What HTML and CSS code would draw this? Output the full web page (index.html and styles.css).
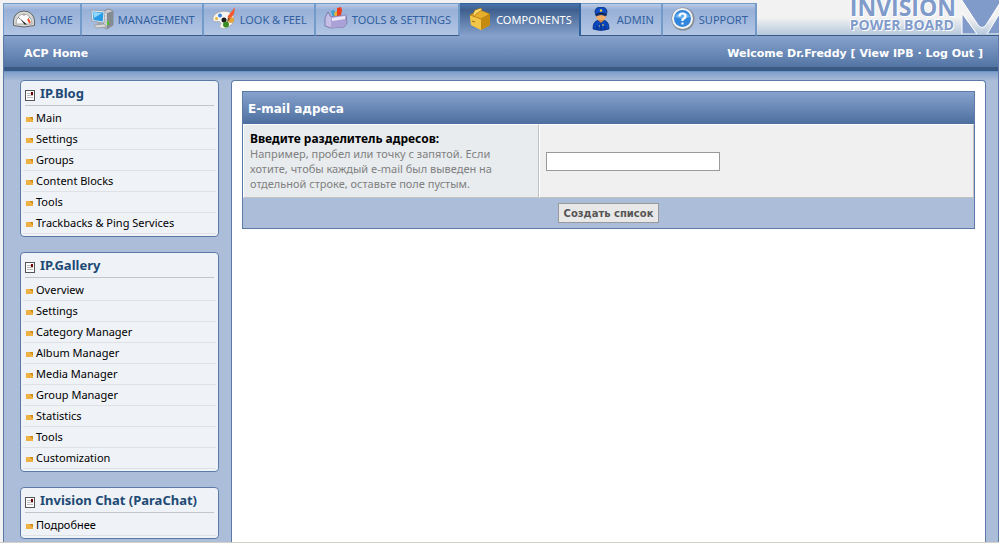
FILE: index.html
```html
<!DOCTYPE html>
<html lang="ru">
<head>
  <meta charset="UTF-8"/>
  <meta name="viewport" content="width=device-width, initial-scale=1.0"/>
  <title>ACP Home</title>
  <link rel="stylesheet" href="styles.css">
</head>
<body>
  <header class="topbar">
    <nav class="tabs">
      <a href="#" class="tab">
        <svg class="icon" viewBox="0 0 24 24">
          <path d="M1.500 18.500V14A10.500 10 0 0 1 22.500 14V18.500Q12 21.500 1.500 18.500Z" fill="#d8d8d6" stroke="#666" stroke-width="1"/>
          <path d="M4 17A8 10 0 0 1 20 17Z" fill="#fff" stroke="#aaa"/>
          <path d="M6 10l2 2M12 7v2M18 10l-2 2" stroke="#888"/>
          <path d="M7.500 11L12.500 17.500L15 17.500Z" fill="#222"/>
          <path d="M16 12l2 4" stroke="#f04a20" stroke-width="2"/>
        </svg>
        HOME
      </a>
      <a href="#" class="tab">
        <svg class="icon" viewBox="0 0 24 24">
          <path d="M13 4l6-2 4 2v14l-6 4-4-2z" fill="#c9ccd0" stroke="#777" stroke-width=".7"/>
          <path d="M17 6v16l6-4V4z" fill="#858b92"/>
          <path d="M14 7l2 1M14 10l2 1" stroke="#fff"/>
          <rect x="17" y="14" width="2" height="4" fill="#55bd32"/>
          <path d="M1 3l14 1-1 12L2 14z" fill="#e6e8ec" stroke="#8a94a5" stroke-width=".7"/>
          <path d="M2.500 4.500l11 1-.8 9L3.500 13z" fill="#279be6"/>
          <path d="M3 5l9 1-8 5z" fill="#93d6fa"/>
          <path d="M7 15h4v3H7z" fill="#a3a7b0"/>
          <path d="M4 18l10-1 3 3-11 1z" fill="#d9dadd" stroke="#888" stroke-width=".6"/>
        </svg>
        MANAGEMENT
      </a>
      <a href="#" class="tab">
        <svg class="icon" viewBox="0 0 24 24">
          <path d="M1 11C2 5 13 2 19 6C24 10 22 18 16 20C13 22 9 22 8 20C7 18 10 17 8 15C6 13 0 17 1 11Z" fill="#f5f4f0" stroke="#a5a5a5" stroke-width=".8"/>
          <circle cx="8" cy="8.500" r="2" fill="#3d85d9"/>
          <circle cx="4.500" cy="11.500" r="1.500" fill="#e7b72b"/>
          <circle cx="12" cy="13" r="2.500" fill="#1b1b1b"/>
          <circle cx="19" cy="13" r="3" fill="#e4a43a"/>
          <circle cx="14" cy="17.500" r="3" fill="#3a8c22"/>
          <path d="M15 16l1-6 2 2z" fill="#8b4a26"/>
          <path d="M15.500 9.500L20 4l3-4-1 7-4 5z" fill="#f4592c"/>
        </svg>
        LOOK &amp; FEEL
      </a>
      <a href="#" class="tab">
        <svg class="icon" viewBox="0 0 24 24">
          <path d="M7 4l3-1 3 9-3 1z" fill="#35a1d1"/>
          <path d="M10 6l3-2 1 8h-3z" fill="#e6b331"/>
          <path d="M13 1l4-1 1 3-2 11-3-1z" fill="#eb3e20"/>
          <path d="M1 11l3-6 3 5 15-2 1 8-3 4-13 1-6-2z" fill="#c5bfe6" stroke="#706aa0" stroke-width=".8"/>
          <path d="M7 10l15-2v9l-2 3-13 1z" fill="#aaa2d6"/>
          <path d="M8 11l13-2v3L8 14z" fill="#eceaf8"/>
        </svg>
        TOOLS &amp; SETTINGS
      </a>
      <a href="#" class="tab active">
        <svg class="icon" viewBox="0 0 24 24">
          <path d="M2 8l10-5 10 4v11l-9 5-10-5z" fill="#edb52e"/>
          <path d="M2 8l11 4v11L3 18z" fill="#f2c649"/>
          <path d="M13 12l9-5v11l-9 5z" fill="#c58a10"/>
          <path d="M2 8l10-5 10 4-9 5z" fill="#e7ae2c" stroke="#9c6d0c" stroke-width=".6"/>
          <path d="M5 7l2-4 6-2 1 2-6 4-2 3z" fill="#ffd86a" stroke="#9c6d0c" stroke-width=".6"/>
          <path d="M4 14l3 1" stroke="#99690a"/>
        </svg>
        COMPONENTS
      </a>
      <a href="#" class="tab">
        <svg class="icon" viewBox="0 0 24 24">
          <path d="M4 22c0-6 2-9 8-9s8 3 8 9q-8 3-16 0z" fill="#0c46bd" stroke="#072872" stroke-width=".7"/>
          <path d="M8 22v-3M16 22v-3M12 15v8" stroke="#082977"/>
          <circle cx="12" cy="9" r="5" fill="#efad69"/>
          <path d="M9 13h6l-3 3z" fill="#d48a43"/>
          <path d="M6 5q0-5 6-5t6 5l-1 4q-5-3-10 0z" fill="#104ac4" stroke="#072765" stroke-width=".7"/>
          <path d="M7 7q5-2 10 0v1q-5-2-10 0z" fill="#111"/>
          <circle cx="12" cy="3.500" r="1.200" fill="#f1d642"/>
          <path d="M10 19h1M13 18h2" stroke="#f1d642"/>
        </svg>
        ADMIN
      </a>
      <a href="#" class="tab">
        <svg class="icon" viewBox="0 0 24 24">
          <circle cx="12" cy="12" r="11.500" fill="#858b93"/>
          <circle cx="11.500" cy="11.500" r="10.500" fill="#f1f2f3"/>
          <circle cx="11.500" cy="11.500" r="8.500" fill="#3185dd"/>
          <path d="M4 10a8 7 0 0 1 15 0q-7 3-15 0z" fill="#69b2ef"/>
          <path d="M8.500 9.500q0-3 3-3t3 2.500q0 2-3 3.500v1.500M11.500 15.500v2" fill="none" stroke="#fff" stroke-width="2.200"/>
        </svg>
        SUPPORT
      </a>
    </nav>
    <div class="logo">
      <div class="logo-text">
        <span class="logo-name">INVISION</span>
        <span class="logo-sub">POWER BOARD</span>
      </div>
      <svg class="logo-mark" viewBox="0 0 38 34">
        <path d="M1 0H38V4L25 25Q21 30 17 25Z" fill="#809bca"/>
        <path d="M1 14L15 33H1ZM38 14V33H27Z" fill="#809bca"/>
        <path d="M0 -1L17 25Q21 30 25 25L39 3M1 34V13L16 34M26 34L39 13" fill="none" stroke="#fff" stroke-width="1"/>
      </svg>
    </div>
  </header>

  <div class="page">
    <div class="menubar">
      <a href="#">ACP Home</a>
      <div>Welcome Dr.Freddy [ <a href="#">View IPB</a> &middot; <a href="#">Log Out</a> ]</div>
    </div>

    <div class="layout">
      <!-- Side menu -->
      <aside class="sidebar">
        <section class="box">
          <h2 class="box-title"><span class="doc"></span>IP.Blog</h2>
          <ul class="menu">
            <li><a href="#">Main</a></li>
            <li><a href="#">Settings</a></li>
            <li><a href="#">Groups</a></li>
            <li><a href="#">Content Blocks</a></li>
            <li><a href="#">Tools</a></li>
            <li><a href="#">Trackbacks &amp; Ping Services</a></li>
          </ul>
        </section>
        <section class="box">
          <h2 class="box-title"><span class="doc"></span>IP.Gallery</h2>
          <ul class="menu">
            <li><a href="#">Overview</a></li>
            <li><a href="#">Settings</a></li>
            <li><a href="#">Category Manager</a></li>
            <li><a href="#">Album Manager</a></li>
            <li><a href="#">Media Manager</a></li>
            <li><a href="#">Group Manager</a></li>
            <li><a href="#">Statistics</a></li>
            <li><a href="#">Tools</a></li>
            <li><a href="#">Customization</a></li>
          </ul>
        </section>
        <section class="box">
          <h2 class="box-title"><span class="doc"></span>Invision Chat (ParaChat)</h2>
          <ul class="menu">
            <li><a href="#">Подробнее</a></li>
          </ul>
        </section>
      </aside>

      <!-- Content -->
      <main class="content">
        <form class="form" onsubmit="return false">
          <h1 class="form-title">E-mail адреса</h1>
          <div class="form-row">
            <label class="form-label" for="separator">
              <b>Введите разделитель адресов:</b>
              <span class="hint">Например, пробел или точку с запятой. Если хотите, чтобы каждый e-mail был выведен на отдельной строке, оставьте поле пустым.</span>
            </label>
            <div class="form-field">
              <input type="text" id="separator" name="separator">
            </div>
          </div>
          <div class="form-footer">
            <button type="submit">Создать список</button>
          </div>
        </form>
      </main>
    </div>
  </div>
</body>
</html>
```

FILE: styles.css
```css
:root {
  --line: #5c7aa8;
  --panel: #abbdd8;
  --dark: #3a5985;
  --tab-line: #739bca;
  --head: linear-gradient(#86a2cd, #4d6f9f);
}
* { box-sizing: border-box; margin: 0; padding: 0; }
body {
  display: flex;
  flex-direction: column;
  height: 100vh;
  overflow: hidden;
  padding: 3px 0 0 3px;
  border-bottom: 1px solid #d4d0c8;
  background: #f2f2f2;
  color: #000;
  font-family: "Noto Sans", sans-serif;
  font-size: 11px;
}
a { color: inherit; text-decoration: none; }

/* Top tabs */
.topbar {
  display: flex;
  flex: none;
  justify-content: space-between;
  height: 33px;
  border-bottom: 1px solid var(--dark);
  background: linear-gradient(#f2f2f2 45%, #b5c8dc);
}
.tabs {
  display: flex;
  height: 33px;
  border-left: 1px solid var(--tab-line);
}
.tab {
  display: flex;
  align-items: center;
  gap: 4px;
  padding: 0 7px 1px 8px;
  border-top: 1px solid var(--tab-line);
  border-right: 2px solid var(--tab-line);
  border-bottom: 1px solid var(--dark);
  background: linear-gradient(#b9cbe6, #98b0d7 6px, #b2c6e4);
  color: #3160a0;
  white-space: nowrap;
}
.tab.active {
  padding-bottom: 2px;
  border-color: #31629c;
  border-bottom: 0;
  background: linear-gradient(#4973ac, #3f608e 6px, #86a2cd);
  color: #fff;
}
.icon { width: 24px; height: 24px; flex: none; }

/* Logo */
.logo {
  display: flex;
  gap: 5px;
  height: 32px;
  color: #809bca;
}
.logo-text {
  display: flex;
  flex-direction: column;
  justify-content: flex-end;
  gap: 4px;
  padding-bottom: 3px;
  font-family: "Open Sans", sans-serif;
  font-weight: bold;
  text-shadow: 1px 1px #fff, -1px -1px #fff;
}
.logo-name { font-size: 23px; line-height: 14px; }
.logo-sub { font-size: 14px; line-height: 14px; }
.logo-mark { width: 38px; height: 34px; margin-top: -3px; }

/* Page body */
.page {
  display: flex;
  flex-direction: column;
  flex: 1;
  border: solid var(--line);
  border-width: 0 1px;
  background: var(--panel);
}
.menubar {
  display: flex;
  flex: none;
  justify-content: space-between;
  align-items: center;
  height: 36px;
  padding: 0 15px 0 20px;
  border-bottom: 1px solid #6a93c6;
  background: var(--head);
  box-shadow: inset 0 -4px var(--dark);
  color: #fff;
  font-family: "DejaVu Sans", sans-serif;
  font-weight: bold;
}
.layout {
  display: flex;
  flex: 1;
  gap: 12px;
  padding: 8px 12px 0 16px;
  background: linear-gradient(#809fcc, var(--panel) 9px);
}
.sidebar {
  display: flex;
  flex-direction: column;
  gap: 15px;
  flex: none;
  width: 199px;
}
.box {
  padding: 0 2px 2px;
  border: 1px solid var(--line);
  border-radius: 4px;
  background: #eff2f7;
}
.box-title {
  display: flex;
  align-items: center;
  gap: 5px;
  height: 25px;
  margin: 0 2px 2px;
  border-bottom: 1px solid #c2c5ca;
  color: #204974;
  font-size: 13px;
  white-space: nowrap;
}
.doc {
  width: 10px;
  height: 11px;
  margin-top: 5px;
  border: 1px solid #555;
  background:
    linear-gradient(#700, #700) 5px 1px / 2px 3px no-repeat,
    repeating-linear-gradient(#fff 0 1px, #bbb 1px 2px) 1px 1px / 6px 7px no-repeat,
    #fff;
}
.menu { list-style: none; }
.menu li {
  height: 21px;
  border-bottom: 1px solid #dfe1e5;
}
.menu a {
  display: flex;
  align-items: center;
  gap: 3px;
  height: 18px;
  padding-left: 3px;
}
.menu a::before {
  content: "";
  width: 7px;
  height: 5px;
  margin-top: 4px;
  background: linear-gradient(45deg, #edb144 70%, #cf8d16 70%);
}

/* Form */
.content {
  flex: 1;
  padding: 10px;
  border: 1px solid var(--line);
  border-bottom: 0;
  border-radius: 4px 4px 0 0;
  background: #fff;
}
.form { border: 1px solid var(--line); }
.form-title {
  height: 32px;
  padding-left: 5px;
  background: var(--head);
  color: #fff;
  font-family: "DejaVu Sans", sans-serif;
  font-size: 12px;
  line-height: 34px;
}
.form-row { display: flex; }
.form-label,
.form-field {
  padding: 6px;
  border: 1px solid;
  border-color: #fff #c2c2c2 #c2c2c2 #fff;
}
.form-label {
  width: 40.5%;
  padding-right: 24px;
  background: #e8ecef;
  line-height: 15px;
}
.form-label b {
  display: block;
  font-size: 12px;
}
.hint { color: #808080; }
.form-field {
  display: flex;
  flex: 1;
  align-items: center;
  background: #f0f0f0;
}
.form-field input {
  width: 174px;
  height: 19px;
  padding: 0 3px;
  border: 1px solid #999;
  background: #fff;
  font: inherit;
}
.form-footer {
  display: flex;
  justify-content: center;
  padding: 5px;
  background: var(--panel);
}
.form-footer button {
  height: 20px;
  padding: 0 5px;
  border: 1px solid #999;
  background: #e8e8e8;
  color: #555;
  font-family: "DejaVu Sans", sans-serif;
  font-size: 10px;
  font-weight: bold;
}
```
